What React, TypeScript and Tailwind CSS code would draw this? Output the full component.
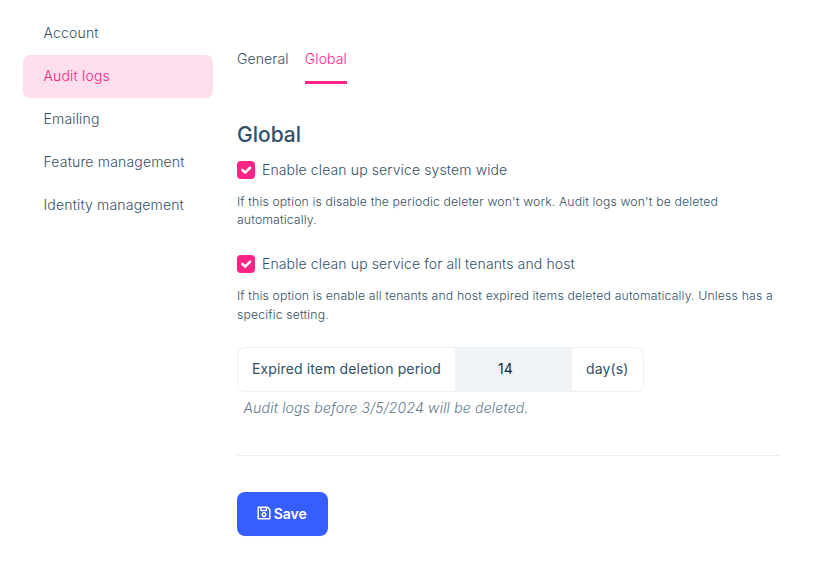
import React from "react";

const nav = ["Account", "Audit logs", "Emailing", "Feature management", "Identity management"];

function Check({ label }: { label: string }) {
  return (
    <label className="flex h-[22px] items-center text-[14px] font-light tracking-[0.12px]">
      <span className="mr-[7px] flex h-[18px] w-[18px] items-center justify-center rounded-[4px] bg-[#fb2384]">
        <svg viewBox="0 0 20 20" className="h-[18px] w-[18px]" fill="none" stroke="#fff" strokeWidth="2.8" strokeLinecap="round" strokeLinejoin="round">
          <path d="M6 10l3 3 5.5-5.5" />
        </svg>
      </span>
      <span className="whitespace-nowrap pb-0.5">{label}</span>
    </label>
  );
}

function SaveIcon() {
  return (
    <svg viewBox="0 0 14 14" className="h-[14px] w-[14px]" fill="none" stroke="#fff" strokeWidth="1.5" strokeLinejoin="round">
      <path d="M1.2 1.2h9.3l2.3 2.3v9.3H1.2z" />
      <path d="M3.9 1.2v3.3h5.5V1.2" />
      <circle cx="7" cy="8.6" r="1.8" />
    </svg>
  );
}

export default function App() {
  return (
    <div className="flex h-[563px] w-[820px] overflow-hidden bg-white font-['Inter',sans-serif] text-[#325168]">
      <nav className="ml-[23px] mt-3 w-[190px] shrink-0 text-[14px] font-light tracking-[0.17px]">
        {nav.map((n) => (
          <div key={n} className={"flex h-[42.8px] items-center rounded-[7px] pb-px pl-[20.5px] " + (n === "Audit logs" ? "bg-[#ffdeed] text-[#fb2384]" : "")}>
            {n}
          </div>
        ))}
      </nav>
      <main className="ml-6 w-[543px] pt-12">
        <div className="flex gap-4 text-[14px] font-light tracking-[0.12px]">
          <div className="h-9 leading-[22px]">General</div>
          <div className="h-9 border-b-[3px] border-[#fb2384] leading-[22px] text-[#fb2384]">Global</div>
        </div>
        <h2 className="mt-[37px] text-[21px] font-medium leading-[28px]">Global</h2>
        <div className="mt-[10px]"><Check label="Enable clean up service system wide" /></div>
        <p className="mt-[11.5px] text-[12.25px] font-light leading-[18.5px] tracking-[0.135px]">
          If this option is disable the periodic deleter won't work. Audit logs won't be deleted<br />automatically.
        </p>
        <div className="mt-[23.5px]"><Check label="Enable clean up service for all tenants and host" /></div>
        <p className="mt-[12px] text-[12.25px] font-light leading-[18.5px] tracking-[0.155px]">
          If this option is enable all tenants and host expired items deleted automatically. Unless has a<br />specific setting.
        </p>
        <div className="mt-[23px] flex h-[45px] w-[407px] overflow-hidden rounded-[8px] border border-[#edf1f4] text-[14px] tracking-[0.13px]">
          <div className="flex w-[217px] items-center whitespace-nowrap pb-[2px] pl-[14px]">Expired item deletion period</div>
          <div className="flex w-[117px] items-center bg-[#f0f4f7] pb-[2px] pl-[43px] text-[#062a44]">14</div>
          <div className="flex items-center pb-[2px] pl-[14px]">day(s)</div>
        </div>
        <p className="ml-[6.5px] mt-[5px] text-[14px] font-light italic leading-[21px] tracking-[0.19px] text-[#62798b]">Audit logs before 3/5/2024 will be deleted.</p>
        <hr className="mt-[37px] border-t border-[#ebedef]" />
        <button className="mt-[36px] flex h-[43.5px] w-[91px] items-center justify-center gap-[2.5px] rounded-[8px] bg-[#355dff] pb-px pr-px text-[14px] font-semibold text-white shadow-[0_0_16px_rgba(0,0,0,0.015)]">
          <SaveIcon />
          <span>Save</span>
        </button>
      </main>
    </div>
  );
}
